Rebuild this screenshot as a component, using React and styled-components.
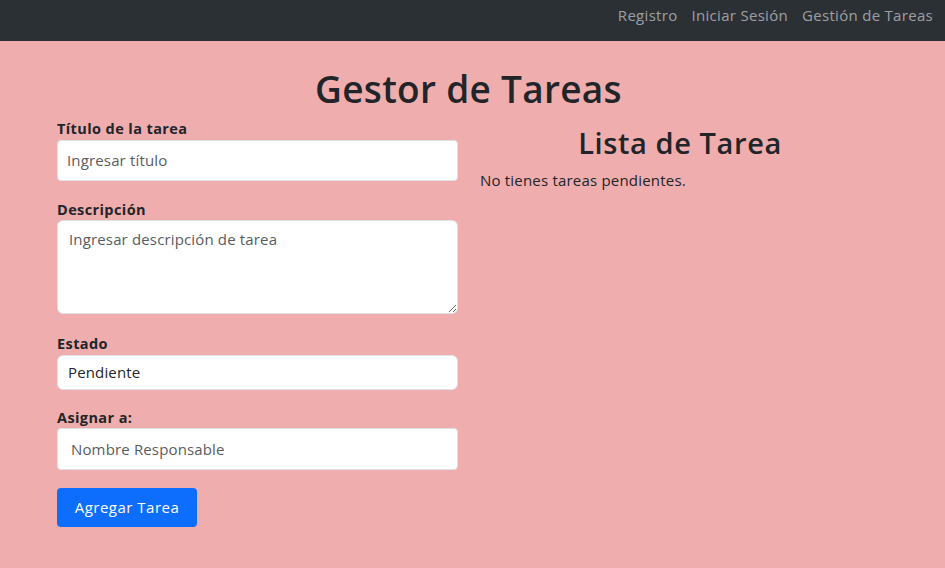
import styled, { createGlobalStyle } from "styled-components"

const GlobalStyle = createGlobalStyle`
* {
  box-sizing: border-box;
}
body {
  margin: 0;
  background-color: #f0adad;
  font-family: "Open Sans", "Noto Sans", sans-serif;
  color: #212529;
}
`

const Navbar = styled.nav`
  height: 41px;
  background-color: #2b3035;
  display: flex;
  justify-content: flex-end;
  align-items: flex-start;
  padding: 5px 12px 0;
  gap: 14px;
`

const NavLink = styled.a`
  color: rgba(255, 255, 255, 0.55);
  font-size: 15px;
  font-weight: 500;
  letter-spacing: 0.3px;
  text-decoration: none;
`

const Main = styled.main`
  padding: 26px 65px 0 57px;
`

const Title = styled.h1`
  margin: 0 0 9px;
  text-align: center;
  font-size: 37px;
  font-weight: 600;
  letter-spacing: 0.3px;
  line-height: 1.2;
`

const Columns = styled.div`
  display: grid;
  grid-template-columns: 401px 400px;
  gap: 22px;
`

const Form = styled.form`
  display: flex;
  flex-direction: column;
`

const Field = styled.div`
  display: flex;
  flex-direction: column;
  margin-bottom: ${p => p.$gap || 20}px;
`

const Label = styled.label`
  font-size: 14.5px;
  font-weight: 700;
  letter-spacing: 0.4px;
  line-height: 1.2;
  margin-bottom: 2px;
`

const Input = styled.input`
  height: ${p => p.$h || 41}px;
  border: 1px solid #dee2e6;
  border-radius: 4px;
  padding: 0 ${p => p.$px || 9}px;
  font-family: inherit;
  font-size: 15px;
  letter-spacing: 0.15px;
  color: #212529;
  background: #fff;
  &::placeholder {
    color: #595c5f;
  }
`

const TextArea = styled.textarea`
  height: 94px;
  border: 1px solid #dee2e6;
  border-radius: 6px;
  padding: 8px 11px;
  font-family: inherit;
  font-size: 15px;
  letter-spacing: 0.15px;
  resize: vertical;
  &::placeholder {
    color: #595c5f;
  }
`

const Select = styled.select`
  height: 35px;
  border: 1px solid #dee2e6;
  border-radius: 6px;
  padding: 0 10px;
  font-family: inherit;
  font-size: 15px;
  letter-spacing: 0.15px;
  color: #212529;
  background: #fff;
  appearance: none;
`

const Button = styled.button`
  width: 140px;
  height: 39px;
  background-color: #0d6efd;
  color: #fff;
  border: none;
  border-radius: 4px;
  font-family: inherit;
  font-size: 15px;
  font-weight: 500;
  letter-spacing: 0.5px;
`

const ListColumn = styled.section`
  display: flex;
  flex-direction: column;
`

const SubTitle = styled.h2`
  margin: 6px 0 9px;
  text-align: center;
  font-size: 29px;
  font-weight: 600;
  letter-spacing: 0.6px;
  line-height: 1.2;
`

const Empty = styled.p`
  margin: 0;
  font-size: 15px;
  font-weight: 500;
  letter-spacing: 0.2px;
`

const App = () => {
  return (
    <>
      <GlobalStyle />
      <Navbar>
        <NavLink>Registro</NavLink>
        <NavLink>Iniciar Sesión</NavLink>
        <NavLink>Gestión de Tareas</NavLink>
      </Navbar>
      <Main>
        <Title>Gestor de Tareas</Title>
        <Columns>
          <Form>
            <Field>
              <Label>Título de la tarea</Label>
              <Input placeholder="Ingresar título" />
            </Field>
            <Field $gap={21}>
              <Label>Descripción</Label>
              <TextArea placeholder="Ingresar descripción de tarea" />
            </Field>
            <Field $gap={19}>
              <Label>Estado</Label>
              <Select defaultValue="pendiente">
                <option value="pendiente">Pendiente</option>
              </Select>
            </Field>
            <Field $gap={18}>
              <Label>Asignar a:</Label>
              <Input $h={42} $px={13} placeholder="Nombre Responsable" />
            </Field>
            <Button type="button">Agregar Tarea</Button>
          </Form>
          <ListColumn>
            <SubTitle>Lista de Tarea</SubTitle>
            <Empty>No tienes tareas pendientes.</Empty>
          </ListColumn>
        </Columns>
      </Main>
    </>
  )
}

export default App
